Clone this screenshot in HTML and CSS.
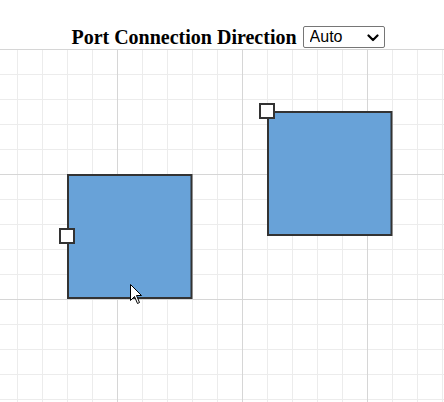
FILE: index.html
```html
<!DOCTYPE html>
<html>
<head>
<meta charset="utf-8">
<link rel="stylesheet" href="styles.css">
</head>
<body>
<div class="toolbar">
  <span class="label">Port Connection Direction</span>
  <span class="select-wrap">
    <select class="dir">
      <option>Auto</option>
      <option>Left</option>
      <option>Right</option>
      <option>Top</option>
      <option>Bottom</option>
    </select>
    <svg class="chev" width="12" height="8" viewBox="0 0 12 8"><path d="M1.5 1.5 L6 6 L10.5 1.5" fill="none" stroke="#000" stroke-width="2.2" stroke-linecap="round" stroke-linejoin="round"/></svg>
  </span>
</div>
<div class="canvas">
  <svg class="diagram" width="444" height="353" viewBox="0 0 444 353">
    <defs>
      <pattern id="grid" x="-8" y="0" width="125" height="125" patternUnits="userSpaceOnUse">
        <rect x="25" y="0" width="1" height="125" fill="#ececec"/>
        <rect x="50" y="0" width="1" height="125" fill="#ececec"/>
        <rect x="75" y="0" width="1" height="125" fill="#ececec"/>
        <rect x="100" y="0" width="1" height="125" fill="#ececec"/>
        <rect x="0" y="25" width="125" height="1" fill="#ececec"/>
        <rect x="0" y="50" width="125" height="1" fill="#ececec"/>
        <rect x="0" y="75" width="125" height="1" fill="#ececec"/>
        <rect x="0" y="100" width="125" height="1" fill="#ececec"/>
        <rect x="0" y="0" width="1" height="125" fill="#d6d6d6"/>
        <rect x="0" y="0" width="125" height="1" fill="#d6d6d6"/>
      </pattern>
    </defs>
    <rect x="0" y="0" width="444" height="353" fill="url(#grid)"/>
    <rect x="68" y="126" width="123.5" height="123" fill="#68a2d8" stroke="#333" stroke-width="2"/>
    <rect x="60" y="180" width="14" height="14" fill="#fff" stroke="#333" stroke-width="2"/>
    <rect x="268" y="63" width="123.5" height="123" fill="#68a2d8" stroke="#333" stroke-width="2"/>
    <rect x="260" y="55" width="14" height="14" fill="#fff" stroke="#333" stroke-width="2"/>
    <path d="M130.5 235.5 L130.5 251.5 L134.5 247.5 L137.5 254.5 L139.5 253.5 L136.5 246.5 L141.5 246.5 Z" fill="#fff" stroke="#000" stroke-width="1" stroke-linejoin="round"/>
  </svg>
</div>
</body>
</html>
```
FILE: styles.css
```css
html, body {
  margin: 0;
  padding: 0;
  background: #fff;
}
body {
  width: 444px;
  height: 402px;
  overflow: hidden;
}
.toolbar {
  height: 49px;
  display: flex;
  align-items: flex-end;
  justify-content: center;
  padding-left: 12px;
  box-sizing: border-box;
}
.label {
  font-family: "Liberation Serif", "Times New Roman", serif;
  font-weight: bold;
  font-size: 20px;
  line-height: 23px;
  color: #000;
}
.select-wrap {
  position: relative;
  display: inline-block;
  margin-left: 6px;
  margin-bottom: 1px;
  height: 22px;
}
.dir {
  display: block;
  -webkit-appearance: none;
  appearance: none;
  font-family: "Liberation Sans", Arial, sans-serif;
  font-size: 16px;
  line-height: 20px;
  width: 82px;
  height: 22px;
  padding: 0 0 0 6px;
  margin: 0;
  border: 1px solid #767676;
  border-radius: 2px;
  background: #fff;
  color: #000;
}
.chev {
  position: absolute;
  right: 6px;
  top: 8px;
  pointer-events: none;
}
.canvas {
  height: 353px;
}
.diagram {
  display: block;
}
```
